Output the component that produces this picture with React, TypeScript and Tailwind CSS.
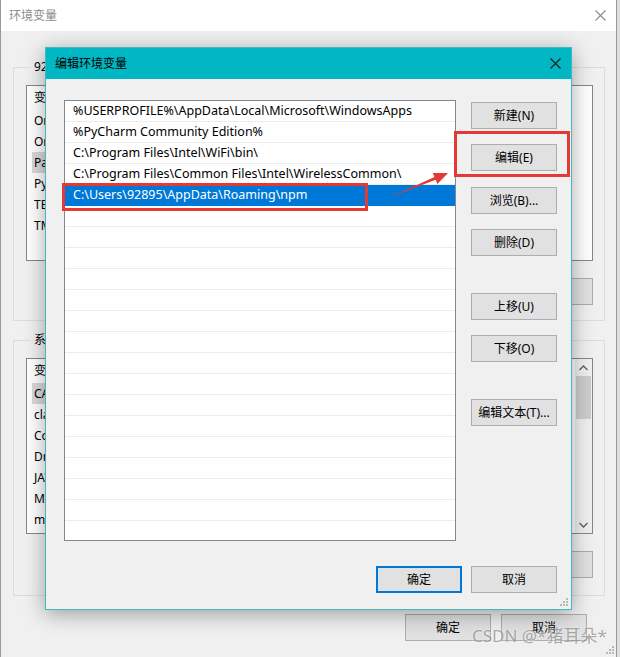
import React from 'react';

const font = "font-['Noto_Sans','Noto_Sans_CJK_SC',sans-serif]";

const editPaths = [
    '%USERPROFILE%\\AppData\\Local\\Microsoft\\WindowsApps',
    '%PyCharm Community Edition%',
    'C:\\Program Files\\Intel\\WiFi\\bin\\',
    'C:\\Program Files\\Common Files\\Intel\\WirelessCommon\\',
    'C:\\Users\\92895\\AppData\\Roaming\\npm',
];

const userVars = ['OneDrive', 'OneDriveConsumer', 'Path', 'PyCharm Community Edition', 'TEMP', 'TMP'];
const sysVars = ['CATALINA_HOME', 'classpath', 'ComSpec', 'DriverData', 'JAVA_HOME', 'MAVEN_HOME', 'modulepath'];

function CloseIcon({ color }: { color: string }) {
    return (
        <svg width="11" height="11" viewBox="0 0 11 11">
            <path d="M0.5 0.5 L10.5 10.5 M10.5 0.5 L0.5 10.5" stroke={color} strokeWidth="1.1" fill="none" />
        </svg>
    );
}

function Grip() {
    return (
        <svg width="8" height="8" viewBox="0 0 8 8">
            <rect x="6" y="0" width="2" height="2" fill="#b8b8b8" />
            <rect x="3" y="3" width="2" height="2" fill="#b8b8b8" />
            <rect x="6" y="3" width="2" height="2" fill="#b8b8b8" />
            <rect x="0" y="6" width="2" height="2" fill="#b8b8b8" />
            <rect x="3" y="6" width="2" height="2" fill="#b8b8b8" />
            <rect x="6" y="6" width="2" height="2" fill="#b8b8b8" />
        </svg>
    );
}

function WinButton({ label, primary = false, className = '' }: { label: string; primary?: boolean; className?: string }) {
    return (
        <div
            className={`flex h-[27px] w-[86px] shrink-0 items-center justify-center bg-[#e1e1e1] text-[12px] text-black ${
                primary ? 'border-2 border-[#0078d7]' : 'border border-[#adadad]'
            } ${className}`}
        >
            {label}
        </div>
    );
}

function VarList({ items, selected, scroll }: { items: string[]; selected: number; scroll?: boolean }) {
    return (
        <div className="flex h-[176px] border border-[#828790] bg-white">
            <div className="flex-1 overflow-hidden">
                <div className="flex h-[24px] items-center pl-[7px] text-[12px] text-black">
                    <span className="w-[200px]">变量</span>
                    <span>值</span>
                </div>
                {items.map((v, i) => (
                    <div key={v} className="flex h-[21px] items-center px-[5px] text-[12px] text-black">
                        <div className={`flex h-full w-[230px] items-center pl-[2px] ${i === selected ? 'bg-[#d9d9d9]' : ''}`}>{v}</div>
                    </div>
                ))}
            </div>
            {scroll && (
                <div className="flex w-[17px] flex-col items-center bg-[#f0f0f0]">
                    <div className="flex h-[17px] items-center justify-center">
                        <svg width="9" height="6" viewBox="0 0 9 6"><path d="M0.5 5 L4.5 1 L8.5 5" stroke="#606060" strokeWidth="1.3" fill="none" /></svg>
                    </div>
                    <div className="h-[43px] w-[15px] bg-[#cdcdcd]" />
                    <div className="flex-1" />
                    <div className="flex h-[17px] items-center justify-center">
                        <svg width="9" height="6" viewBox="0 0 9 6"><path d="M0.5 1 L4.5 5 L8.5 1" stroke="#606060" strokeWidth="1.3" fill="none" /></svg>
                    </div>
                </div>
            )}
        </div>
    );
}

function GroupBox({ title, children, className = '' }: { title: string; children: React.ReactNode; className?: string }) {
    return (
        <fieldset className={`border border-[#dcdcdc] pl-[12px] pr-[11px] ${className}`}>
            <legend className="ml-[4px] px-[4px] text-[12px] leading-[16px] text-black">{title}</legend>
            {children}
        </fieldset>
    );
}

function EditDialog() {
    return (
        <div className="absolute left-[45px] top-[47px] flex h-[563px] w-[527px] flex-col border border-[#3fb9c3] bg-[#f0f0f0] shadow-[0_4px_20px_rgba(0,0,0,0.35)]">
            <div className="flex h-[31px] shrink-0 items-center justify-between bg-[#00b7c3] pl-[9px] pr-[10px] text-[12px] text-black">
                <span>编辑环境变量</span>
                <CloseIcon color="#1a1a1a" />
            </div>
            <div className="relative flex flex-1 flex-col pl-[18px] pr-[14px] pt-[21px]">
                <div className="flex gap-[15px]">
                    <div className="h-[441px] w-[392px] overflow-hidden border border-[#828790] bg-white">
                        {Array.from({ length: 21 }).map((_, i) => {
                            const text = editPaths[i];
                            const sel = i === 4;
                            return (
                                <div
                                    key={i}
                                    className={`flex h-[21px] items-center border-b pl-[8px] text-[12.5px] ${
                                        sel ? 'border-[#0078d7] bg-[#0078d7] text-white' : 'border-[#ececec] text-black'
                                    }`}
                                >
                                    {text}
                                </div>
                            );
                        })}
                    </div>
                    <div className="flex flex-col">
                        <WinButton label="新建(N)" className="mt-[2px]" />
                        <WinButton label="编辑(E)" className="mt-[15px]" />
                        <WinButton label="浏览(B)..." className="mt-[16px]" />
                        <WinButton label="删除(D)" className="mt-[15px]" />
                        <WinButton label="上移(U)" className="mt-[37px]" />
                        <WinButton label="下移(O)" className="mt-[15px]" />
                        <WinButton label="编辑文本(T)..." className="mt-[37px]" />
                    </div>
                </div>
                <div className="mt-[25px] flex justify-end gap-[9px]">
                    <WinButton label="确定" primary />
                    <WinButton label="取消" />
                </div>
                <div className="absolute bottom-[3px] right-[3px] flex">
                    <Grip />
                </div>
            </div>
        </div>
    );
}

export default function App() {
    return (
        <div className={`relative h-[657px] w-[620px] overflow-hidden bg-[#dedede] ${font}`}>
            {/* background window */}
            <div className="flex h-full w-[617px] flex-col border-l border-r border-[#9a9a9a] bg-[#f0f0f0]">
                <div className="flex h-[31px] shrink-0 items-center justify-between bg-white pl-[8px] pr-[10px] text-[12px] text-[#8c8c8c]">
                    <span>环境变量</span>
                    <CloseIcon color="#8c8c8c" />
                </div>
                <div className="flex flex-col pl-[12px] pr-[11px]">
                    <GroupBox title="92895 的用户变量(U)" className="mt-[28px] h-[262px]">
                        <div className="mt-[10px]">
                            <VarList items={userVars} selected={2} />
                        </div>
                        <div className="mt-[17px] flex justify-end gap-[9px]">
                            <WinButton label="新建(N)..." />
                            <WinButton label="编辑(E)..." />
                            <WinButton label="删除(D)" />
                        </div>
                    </GroupBox>
                    <GroupBox title="系统变量(S)" className="mt-[11px] h-[264px]">
                        <div className="mt-[10px]">
                            <VarList items={sysVars} selected={0} scroll />
                        </div>
                        <div className="mt-[17px] flex justify-end gap-[9px]">
                            <WinButton label="新建(W)..." />
                            <WinButton label="编辑(I)..." />
                            <WinButton label="删除(L)" />
                        </div>
                    </GroupBox>
                    <div className="mt-[18px] flex justify-end gap-[10px] pr-[18px]">
                        <WinButton label="确定" />
                        <WinButton label="取消" />
                    </div>
                </div>
                <div className="absolute bottom-[3px] right-[6px] flex">
                    <Grip />
                </div>
            </div>

            <EditDialog />

            {/* red annotations */}
            <div className="absolute left-[454px] top-[131px] h-[46px] w-[116px] border-[3px] border-[#e53935]" />
            <div className="absolute left-[62px] top-[183px] h-[28px] w-[306px] border-[3px] border-[#e53935]" />
            <svg className="absolute left-0 top-0" width="620" height="657" viewBox="0 0 620 657">
                <polygon points="388,198 434.5,177 432.8,172.9 448,173 437.4,183.9 435.7,179.8" fill="#e53935" />
            </svg>

            {/* watermark */}
            <div className="absolute left-[472px] top-[625px] text-[17px] leading-[22px] text-[rgba(100,100,100,0.55)] [text-shadow:0_0_2px_rgba(255,255,255,0.8)]">
                CSDN @*猪耳朵*
            </div>
        </div>
    );
}
